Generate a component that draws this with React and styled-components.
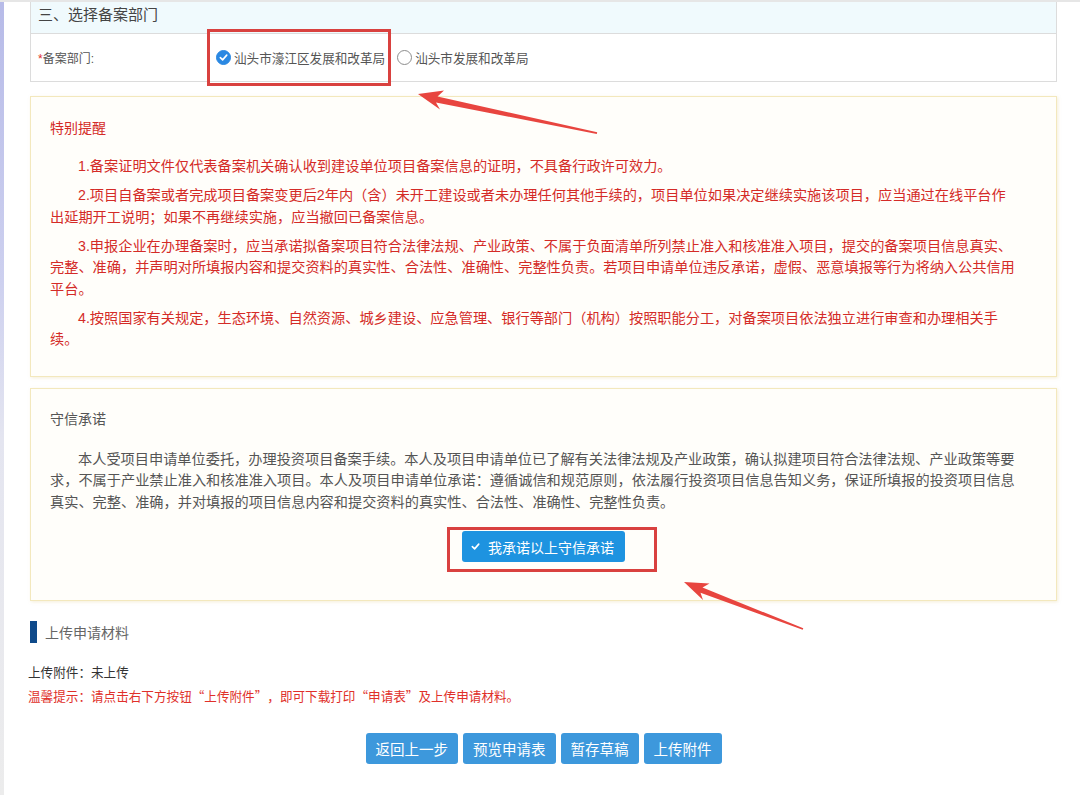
import React from 'react';
import styled, { createGlobalStyle } from 'styled-components';

const GlobalStyle = createGlobalStyle`
  html, body {
    margin: 0;
    padding: 0;
    background: #fff;
  }
  body {
    font-family: "Liberation Sans", "Noto Sans CJK SC", sans-serif;
    text-spacing-trim: space-all;
  }
`;

const Page = styled.div`
  position: relative;
  width: 1080px;
  height: 795px;
  overflow: hidden;
  display: flex;
  box-sizing: border-box;
  border-top: 2px solid #e6e6e6;
`;

const SideStrip = styled.div`
  width: 4px;
  flex-shrink: 0;
  background: linear-gradient(180deg, #b7bbe8 0%, #cdd0ef 35%, #e4e5f0 55%, #ececec 100%);
`;

const Main = styled.div`
  width: 1027px;
  margin-left: 26px;
  display: flex;
  flex-direction: column;
`;

// 三、选择备案部门
const DeptSection = styled.section`
  border: 1px solid #dcdcdc;
  border-top: none;
`;

const SectionHead = styled.div`
  height: 31px;
  padding-left: 7px;
  background: #f0fafd;
  border-bottom: 1px solid #dcdcdc;
  font-size: 15px;
  line-height: 26px;
  color: #444;
`;

const FieldRow = styled.div`
  display: flex;
  align-items: center;
  height: 47px;
`;

const FieldLabel = styled.div`
  width: 177px;
  padding-left: 7px;
  box-sizing: border-box;
  font-size: 12px;
  color: #555;
  span {
    color: #e0302a;
  }
`;

const Options = styled.div`
  display: flex;
  align-items: center;
  gap: 12px;
  padding-left: 8px;
`;

const RadioOption = styled.label`
  position: relative;
  display: flex;
  align-items: center;
  gap: 3px;
  height: 18px;
  font-size: 12.6px;
  color: #555;
  white-space: nowrap;
`;

const RadioDot = styled.span`
  width: 15px;
  height: 15px;
  border-radius: 50%;
  box-sizing: border-box;
  display: flex;
  align-items: center;
  justify-content: center;
  background: ${(p) => (p.$checked ? '#2a88e2' : '#fff')};
  border: 1px solid ${(p) => (p.$checked ? '#2a88e2' : '#8d8d8d')};
`;

// red annotation frame drawn over a control
const Marked = styled.span`
  position: relative;
  display: inline-flex;
  &::after {
    content: '';
    position: absolute;
    top: ${(p) => p.$top}px;
    bottom: ${(p) => p.$bottom}px;
    left: ${(p) => p.$left}px;
    right: ${(p) => p.$right}px;
    border: 3px solid #d9413f;
    pointer-events: none;
  }
`;

const NoticeBox = styled.div`
  margin-top: ${(p) => p.$gap}px;
  padding: ${(p) => p.$pad};
  border: 1px solid #f3e8bd;
  background: #fffefa;
  box-shadow: 1px 1px 3px rgba(225, 210, 150, 0.35);
  color: ${(p) => p.$color};
`;

const NoticeTitle = styled.div`
  font-size: 14px;
  line-height: 22px;
  margin-bottom: ${(p) => p.$gap}px;
`;

const Para = styled.p`
  margin: 0 0 7.5px;
  font-size: 14.2px;
  line-height: 21.5px;
  text-indent: 28px;
  white-space: nowrap;
  &:last-child {
    margin-bottom: 0;
  }
`;

const PromiseRow = styled.div`
  display: flex;
  justify-content: center;
  margin-top: 18px;
`;

const PromiseBtn = styled.button`
  display: flex;
  align-items: center;
  gap: 8px;
  height: 31px;
  padding: 0 11px 0 9px;
  border: none;
  border-radius: 3px;
  background: #1e93e0;
  color: #fff;
  font-family: inherit;
  font-size: 14px;
  cursor: pointer;
`;

const UploadHead = styled.div`
  display: flex;
  align-items: center;
  gap: 8px;
  height: 22px;
  margin-top: 20px;
  font-size: 14px;
  color: #666;
  &::before {
    content: '';
    width: 7px;
    height: 22px;
    background: #0f4a8a;
  }
`;

const InfoLines = styled.div`
  margin-top: 17px;
  margin-left: -2px;
  font-family: "Noto Sans CJK SC", sans-serif;
  font-size: 12.6px;
  line-height: 24px;
`;

const InfoLine = styled.div`
  color: ${(p) => (p.$warn ? '#e0302a' : '#333')};
`;

const ActionBar = styled.div`
  display: flex;
  justify-content: center;
  gap: 5px;
  margin-top: 25px;
`;

const ActionBtn = styled.button`
  height: 31px;
  padding: 0 10px;
  border: none;
  border-radius: 3px;
  background: #3d98dc;
  color: #fff;
  font-family: inherit;
  font-size: 14.5px;
  cursor: pointer;
`;

const Annotations = styled.svg`
  position: absolute;
  left: 0;
  top: 0;
  pointer-events: none;
`;

const Check = ({ size = 9 }) => (
  <svg width={size} height={size} viewBox="0 0 10 10">
    <path d="M1.5 5.2 L4 7.6 L8.6 2.4" fill="none" stroke="#fff" strokeWidth="1.8" strokeLinecap="round" strokeLinejoin="round" />
  </svg>
);

const reminders = [
  ['1.备案证明文件仅代表备案机关确认收到建设单位项目备案信息的证明，不具备行政许可效力。'],
  [
    '2.项目自备案或者完成项目备案变更后2年内（含）未开工建设或者未办理任何其他手续的，项目单位如果决定继续实施该项目，应当通过在线平台作',
    '出延期开工说明；如果不再继续实施，应当撤回已备案信息。',
  ],
  [
    '3.申报企业在办理备案时，应当承诺拟备案项目符合法律法规、产业政策、不属于负面清单所列禁止准入和核准准入项目，提交的备案项目信息真实、',
    '完整、准确，并声明对所填报内容和提交资料的真实性、合法性、准确性、完整性负责。若项目申请单位违反承诺，虚假、恶意填报等行为将纳入公共信用',
    '平台。',
  ],
  [
    '4.按照国家有关规定，生态环境、自然资源、城乡建设、应急管理、银行等部门（机构）按照职能分工，对备案项目依法独立进行审查和办理相关手',
    '续。',
  ],
];

const promise = [
  '本人受项目申请单位委托，办理投资项目备案手续。本人及项目申请单位已了解有关法律法规及产业政策，确认拟建项目符合法律法规、产业政策等要',
  '求，不属于产业禁止准入和核准准入项目。本人及项目申请单位承诺：遵循诚信和规范原则，依法履行投资项目信息告知义务，保证所填报的投资项目信息',
  '真实、完整、准确，并对填报的项目信息内容和提交资料的真实性、合法性、准确性、完整性负责。',
];

const lines = (arr) =>
  arr.map((t, i) => (
    <React.Fragment key={i}>
      {i > 0 && <br />}
      {t}
    </React.Fragment>
  ));

const App = () => {
  return (
    <Page>
      <GlobalStyle />
      <SideStrip />
      <Main>
        <DeptSection>
          <SectionHead>三、选择备案部门</SectionHead>
          <FieldRow>
            <FieldLabel>
              <span>*</span>备案部门:
            </FieldLabel>
            <Options>
              <Marked $top={-20} $bottom={-19} $left={-9} $right={-6}>
                <RadioOption>
                  <RadioDot $checked>
                    <Check size={9} />
                  </RadioDot>
                  汕头市濠江区发展和改革局
                </RadioOption>
              </Marked>
              <RadioOption>
                <RadioDot />
                汕头市发展和改革局
              </RadioOption>
            </Options>
          </FieldRow>
        </DeptSection>

        <NoticeBox $gap={14} $pad="20px 19px 25px" $color="#d42b27">
          <NoticeTitle $gap={17}>特别提醒</NoticeTitle>
          {reminders.map((r, i) => (
            <Para key={i}>{lines(r)}</Para>
          ))}
        </NoticeBox>

        <NoticeBox $gap={11} $pad="19px 19px 38px" $color="#555">
          <NoticeTitle $gap={19}>守信承诺</NoticeTitle>
          <Para>{lines(promise)}</Para>
          <PromiseRow>
            <Marked $top={-4} $bottom={-10} $left={-15} $right={-32}>
              <PromiseBtn>
                <Check size={9} />
                我承诺以上守信承诺
              </PromiseBtn>
            </Marked>
          </PromiseRow>
        </NoticeBox>

        <UploadHead>上传申请材料</UploadHead>
        <InfoLines>
          <InfoLine>上传附件：未上传</InfoLine>
          <InfoLine $warn>温馨提示：请点击右下方按钮“上传附件”，即可下载打印“申请表”及上传申请材料。</InfoLine>
        </InfoLines>

        <ActionBar>
          <ActionBtn>返回上一步</ActionBtn>
          <ActionBtn>预览申请表</ActionBtn>
          <ActionBtn>暂存草稿</ActionBtn>
          <ActionBtn>上传附件</ActionBtn>
        </ActionBar>
      </Main>

      <Annotations width="1080" height="795">
        <polygon
          fill="#e8453f"
          points="418,92 444,88.5 437.5,94.5 597.2,130.3 596.8,131.9 436,100.5 440,107.5"
        />
        <polygon
          fill="#e8453f"
          points="684,580 709.5,581.5 702.5,585.5 803.3,626.3 802.7,627.8 700.5,590.8 703,598"
        />
      </Annotations>
    </Page>
  );
};

export default App;
